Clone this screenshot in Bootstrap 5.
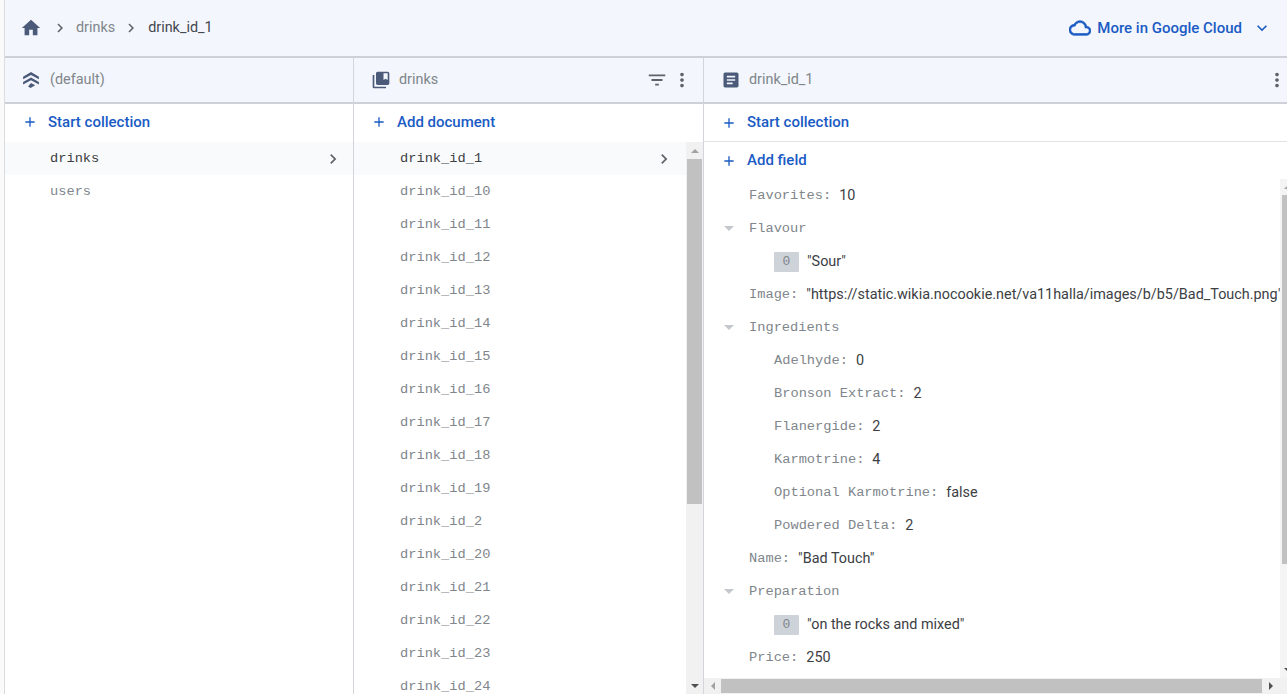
<!DOCTYPE html>
<html lang="en">
<head>
  <meta charset="UTF-8" />
  <meta name="viewport" content="width=device-width, initial-scale=1.0" />
  <title>Cloud Firestore data</title>
  <link href="https://cdn.jsdelivr.net/npm/bootstrap@5.3.3/dist/css/bootstrap.min.css" rel="stylesheet">
  <style>
    html, body { height: 694px; overflow: hidden; }
    body { font-family: Roboto, "Liberation Sans", sans-serif; font-size: 14.4px; color: #3c4043; background: #fafafa; padding-left: 4px; }
    .fs-shell { height: 694px; border-left: 1px solid #dadce0; background: #fff; }
    .fs-crumbs { height: 58px; flex: none; background: #f3f6fc; border-bottom: 2px solid #cdd0d6; padding: 0 15px; }
    .fs-crumbs .crumb-muted { color: #80868b; }
    .fs-crumbs .crumb-now { color: #44474e; }
    .fs-sep { margin: 0 8px 0 7px; }
    .fs-sep-first { margin: 0 7px 0 9px; }
    .fs-cloud { color: #1a5bc4; font-weight: 500; font-size: 15px; }
    .fs-cloud-ico { stroke: currentColor; stroke-width: .7; margin-right: 6px; }
    .fs-cloud-more { margin-left: 10px; }
    .fs-cols { height: 636px; }
    .fs-col { width: 350px; flex: none; border-right: 1px solid #d3d5da; height: 100%; }
    .fs-col-first { width: 349px; }
    .fs-col-last { flex: 1 1 0; min-width: 0; height: 100%; }
    .fs-head { height: 46px; flex: none; background: #f3f6fc; border-bottom: 2px solid #cdd0d6; color: #80868b; padding: 0 17px; }
    .fs-col-first .fs-head { padding-left: 16px; }
    .fs-action { height: 38px; flex: none; padding: 0 17px 2px; color: #1a5bc4; font-weight: 500; font-size: 15px; gap: 10px; }
    .fs-action-rule { border-bottom: 1px solid #e0e2e6; padding-bottom: 0; }
    .fs-action-short { height: 37px; padding-bottom: 0; }
    .fs-mono { font-family: "Liberation Mono", "DejaVu Sans Mono", monospace; font-size: 13.7px; }
    .fs-row { height: 33px; flex: none; padding: 2px 12px 0 46px; color: #80868b; }
    .fs-col-first .fs-row { padding: 2px 10px 0 45px; }
    .fs-row-on { background: #f9fafc; color: #3c4043; }
    .fs-row-on svg { margin-top: -2px; }
    .fs-body { min-height: 0; }
    .fs-bar-v { width: 17px; flex: none; background: #f1f1f1; }
    .fs-thumb-v { width: 15px; height: 345px; background: #c1c1c1; margin: 0 auto; }
    .fs-btn { height: 17px; flex: none; }
    .fs-tri-up { width: 0; height: 0; border: 4px solid transparent; border-top: 0; border-bottom: 4px solid #a3a3a3; }
    .fs-tri-dn { width: 0; height: 0; border: 4px solid transparent; border-bottom: 0; border-top: 4px solid #505050; }
    .fs-tri-lf { width: 0; height: 0; border: 4px solid transparent; border-left: 0; border-right: 4px solid #a3a3a3; }
    .fs-tri-rt { width: 0; height: 0; border: 4px solid transparent; border-right: 0; border-left: 4px solid #505050; }
    .fs-doc { min-height: 0; }
    .fs-fields { min-width: 0; overflow: hidden; }
    .fs-field { height: 33px; flex: none; white-space: nowrap; padding-left: 45px; }
    .fs-field.fs-nest { padding-left: 70px; }
    .fs-key { color: #80868b; margin-right: 8px; padding-top: 2px; }
    .fs-val { color: #3c4043; }
    .fs-caret { width: 0; height: 0; border: 5px solid transparent; border-bottom: 0; border-top: 5px solid #c4c7cc; margin-left: 20px; margin-right: 15px; }
    .fs-field.fs-group { padding-left: 0; }
    .fs-idx { width: 25px; height: 20px; background: #ced2d9; color: #80868b; margin-right: 8px; border-radius: 1px; font-size: 13px; }
    .fs-bar-vdoc { width: 7px; flex: none; background: #f4f4f4; overflow: hidden; }
    .fs-btn-vdoc { height: 16px; flex: none; padding-left: 4px; }
    .fs-thumb-vdoc { height: 369px; width: 5px; margin-left: 2px; background: #c1c1c1; }
    .fs-bar-h { height: 16px; flex: none; background: #f1f1f1; }
    .fs-btn-h { width: 17px; flex: none; height: 14px; }
    .fs-btn-hr { width: 18px; flex: none; height: 14px; }
    .fs-corner { width: 7px; flex: none; }
    .fs-thumb-h { flex: 1 1 0; background: #c1c1c1; height: 14px; }
    .fs-ico { fill: currentColor; flex: none; }
    .fs-ink { color: #4a5a78; }
    .fs-grey { color: #5f6368; }
    .fs-dots-col { margin-left: 3px; margin-right: -7px; }
    .fs-dots-doc { margin-right: -18px; }
    .fs-head-ico { margin-right: 8px; }
    .fs-col-first .fs-head-ico { margin-right: 9px; }
  </style>
</head>
<body>
  <div class="fs-shell d-flex flex-column">
    <!-- Breadcrumb bar -->
    <div class="fs-crumbs d-flex align-items-center">
      <svg class="fs-ico fs-ink" width="22" height="22" viewBox="0 0 24 24"><path d="M10 20v-6h4v6h5v-8h3L12 3 2 12h3v8z"/></svg>
      <svg class="fs-ico fs-grey fs-sep-first" width="18" height="18" viewBox="0 0 24 24"><path d="M10 6L8.59 7.41 13.17 12l-4.58 4.59L10 18l6-6z"/></svg>
      <span class="crumb-muted">drinks</span>
      <svg class="fs-ico fs-grey fs-sep" width="18" height="18" viewBox="0 0 24 24"><path d="M10 6L8.59 7.41 13.17 12l-4.58 4.59L10 18l6-6z"/></svg>
      <span class="crumb-now">drink_id_1</span>
      <div class="ms-auto d-flex align-items-center fs-cloud">
        <svg class="fs-ico fs-cloud-ico" width="22" height="22" viewBox="0 0 24 24"><path d="M19.35 10.04C18.67 6.59 15.64 4 12 4 9.11 4 6.6 5.64 5.35 8.04 2.34 8.36 0 10.91 0 14c0 3.31 2.69 6 6 6h13c2.76 0 5-2.24 5-5 0-2.64-2.05-4.78-4.65-4.96zM19 18H6c-2.21 0-4-1.79-4-4s1.79-4 4-4h.71C7.37 7.69 9.48 6 12 6c3.04 0 5.5 2.46 5.5 5.5v.5H19c1.66 0 3 1.34 3 3s-1.34 3-3 3z"/></svg>
        <span>More in Google Cloud</span>
        <svg class="fs-ico fs-cloud-more" width="20" height="20" viewBox="0 0 24 24"><path d="M16.59 8.59L12 13.17 7.41 8.59 6 10l6 6 6-6z"/></svg>
      </div>
    </div>

    <div class="fs-cols d-flex">
      <!-- Database column -->
      <div class="fs-col fs-col-first d-flex flex-column">
        <div class="fs-head d-flex align-items-center">
          <svg class="fs-ico fs-ink fs-head-ico" width="20" height="20" viewBox="0 0 24 24"><path d="M12 2.5l9.5 5.5v3.2L12 6 2.5 11.200V8z"/><path d="M12 9l9.500 5.300v3.200L12 12.300 2.500 17.500v-3.200z"/><path d="M12 15.500l5 2.700-5.500 3.300-3-1.800z"/></svg>
          <span>(default)</span>
        </div>
        <div class="fs-action d-flex align-items-center">
          <svg class="fs-ico" width="16" height="16" viewBox="0 0 24 24"><path d="M19 13h-6v6h-2v-6H5v-2h6V5h2v6h6v2z"/></svg>
          <span>Start collection</span>
        </div>
        <div class="fs-row fs-row-on fs-mono d-flex align-items-center justify-content-between">
          <span>drinks</span>
          <svg class="fs-ico fs-grey" width="20" height="20" viewBox="0 0 24 24"><path d="M10 6L8.59 7.41 13.17 12l-4.58 4.59L10 18l6-6z"/></svg>
        </div>
        <div class="fs-row fs-mono d-flex align-items-center"><span>users</span></div>
      </div>

      <!-- Collection column -->
      <div class="fs-col d-flex flex-column">
        <div class="fs-head d-flex align-items-center">
          <svg class="fs-ico fs-ink fs-head-ico" width="20" height="20" viewBox="0 0 24 24"><path d="M4 6H2v14c0 1.1.9 2 2 2h14v-2H4V6zm16-4H8c-1.1 0-2 .9-2 2v12c0 1.1.9 2 2 2h12c1.1 0 2-.9 2-2V4c0-1.1-.9-2-2-2zm0 10l-2.5-1.5L15 12V4h5v8z"/></svg>
          <span>drinks</span>
          <svg class="fs-ico fs-grey ms-auto" width="22" height="22" viewBox="0 0 24 24"><path d="M10 18h4v-2h-4v2zM3 6v2h18V6H3zm3 7h12v-2H6v2z"/></svg>
          <svg class="fs-ico fs-grey fs-dots-col" width="22" height="22" viewBox="0 0 24 24"><path d="M12 8c1.1 0 2-.9 2-2s-.9-2-2-2-2 .9-2 2 .9 2 2 2zm0 2c-1.1 0-2 .9-2 2s.9 2 2 2 2-.9 2-2-.9-2-2-2zm0 6c-1.1 0-2 .9-2 2s.9 2 2 2 2-.9 2-2-.9-2-2-2z"/></svg>
        </div>
        <div class="fs-action d-flex align-items-center">
          <svg class="fs-ico" width="16" height="16" viewBox="0 0 24 24"><path d="M19 13h-6v6h-2v-6H5v-2h6V5h2v6h6v2z"/></svg>
          <span>Add document</span>
        </div>
        <div class="fs-body d-flex flex-grow-1">
          <div class="flex-grow-1 overflow-hidden d-flex flex-column" id="docList"></div>
          <div class="fs-bar-v d-flex flex-column">
            <div class="fs-btn d-flex align-items-center justify-content-center"><div class="fs-tri-up"></div></div>
            <div class="fs-thumb-v"></div>
            <div class="flex-grow-1"></div>
            <div class="fs-btn d-flex align-items-center justify-content-center"><div class="fs-tri-dn"></div></div>
          </div>
        </div>
      </div>

      <!-- Document column -->
      <div class="fs-col-last d-flex flex-column">
        <div class="fs-head d-flex align-items-center">
          <svg class="fs-ico fs-ink fs-head-ico" width="20" height="20" viewBox="0 0 24 24"><path d="M19 3H5c-1.1 0-2 .9-2 2v14c0 1.1.9 2 2 2h14c1.1 0 2-.9 2-2V5c0-1.1-.9-2-2-2zm-5 14H7v-2h7v2zm3-4H7v-2h10v2zm0-4H7V7h10v2z"/></svg>
          <span>drink_id_1</span>
          <svg class="fs-ico fs-grey ms-auto fs-dots-doc" width="22" height="22" viewBox="0 0 24 24"><path d="M12 8c1.1 0 2-.9 2-2s-.9-2-2-2-2 .9-2 2 .9 2 2 2zm0 2c-1.1 0-2 .9-2 2s.9 2 2 2 2-.9 2-2-.9-2-2-2zm0 6c-1.1 0-2 .9-2 2s.9 2 2 2 2-.9 2-2-.9-2-2-2z"/></svg>
        </div>
        <div class="fs-action fs-action-rule d-flex align-items-center">
          <svg class="fs-ico" width="16" height="16" viewBox="0 0 24 24"><path d="M19 13h-6v6h-2v-6H5v-2h6V5h2v6h6v2z"/></svg>
          <span>Start collection</span>
        </div>
        <div class="fs-action fs-action-short d-flex align-items-center">
          <svg class="fs-ico" width="16" height="16" viewBox="0 0 24 24"><path d="M19 13h-6v6h-2v-6H5v-2h6V5h2v6h6v2z"/></svg>
          <span>Add field</span>
        </div>
        <div class="fs-doc d-flex flex-grow-1">
          <div class="fs-fields flex-grow-1 d-flex flex-column" id="fieldList"></div>
          <div class="fs-bar-vdoc d-flex flex-column">
            <div class="fs-btn-vdoc d-flex align-items-center"><div class="fs-tri-up"></div></div>
            <div class="fs-thumb-vdoc"></div>
            <div class="flex-grow-1"></div>
            <div class="fs-btn-vdoc d-flex align-items-center"><div class="fs-tri-dn"></div></div>
          </div>
        </div>
        <div class="fs-bar-h d-flex align-items-center">
          <div class="fs-btn-h d-flex align-items-center justify-content-center"><div class="fs-tri-lf"></div></div>
          <div class="fs-thumb-h"></div>
          <div class="fs-btn-hr d-flex align-items-center justify-content-center"><div class="fs-tri-rt"></div></div>
          <div class="fs-corner"></div>
        </div>
      </div>
    </div>
  </div>

  <script>
    const docIds = ['drink_id_1', 'drink_id_10', 'drink_id_11', 'drink_id_12', 'drink_id_13', 'drink_id_14', 'drink_id_15',
      'drink_id_16', 'drink_id_17', 'drink_id_18', 'drink_id_19', 'drink_id_2', 'drink_id_20', 'drink_id_21', 'drink_id_22',
      'drink_id_23', 'drink_id_24'];
    const chevron = '<svg class="fs-ico fs-grey" width="20" height="20" viewBox="0 0 24 24"><path d="M10 6L8.59 7.41 13.17 12l-4.58 4.59L10 18l6-6z"/></svg>';

    document.getElementById('docList').innerHTML = docIds.map((id, i) =>
      `<div class="fs-row ${i === 0 ? 'fs-row-on' : ''} fs-mono d-flex align-items-center justify-content-between"><span>${id}</span>${i === 0 ? chevron : ''}</div>`
    ).join('');

    const fields = [
      { key: 'Favorites', val: '10' },
      { group: 'Flavour' },
      { idx: '0', val: '"Sour"' },
      { key: 'Image', val: '"https://static.wikia.nocookie.net/va11halla/images/b/b5/Bad_Touch.png"' },
      { group: 'Ingredients' },
      { key: 'Adelhyde', val: '0', nest: true },
      { key: 'Bronson Extract', val: '2', nest: true },
      { key: 'Flanergide', val: '2', nest: true },
      { key: 'Karmotrine', val: '4', nest: true },
      { key: 'Optional Karmotrine', val: 'false', nest: true },
      { key: 'Powdered Delta', val: '2', nest: true },
      { key: 'Name', val: '"Bad Touch"' },
      { group: 'Preparation' },
      { idx: '0', val: '"on the rocks and mixed"' },
      { key: 'Price', val: '250' }
    ];

    document.getElementById('fieldList').innerHTML = fields.map(f => {
      if (f.group) {
        return `<div class="fs-field fs-group d-flex align-items-center"><div class="fs-caret"></div><span class="fs-key fs-mono">${f.group}</span></div>`;
      }
      if (f.idx) {
        return `<div class="fs-field fs-nest d-flex align-items-center"><span class="fs-idx fs-mono d-flex align-items-center justify-content-center">${f.idx}</span><span class="fs-val">${f.val}</span></div>`;
      }
      return `<div class="fs-field ${f.nest ? 'fs-nest' : ''} d-flex align-items-center"><span class="fs-key fs-mono">${f.key}:</span><span class="fs-val">${f.val}</span></div>`;
    }).join('');
  </script>
  <script src="https://cdn.jsdelivr.net/npm/bootstrap@5.3.3/dist/js/bootstrap.bundle.min.js"></script>
</body>
</html>
